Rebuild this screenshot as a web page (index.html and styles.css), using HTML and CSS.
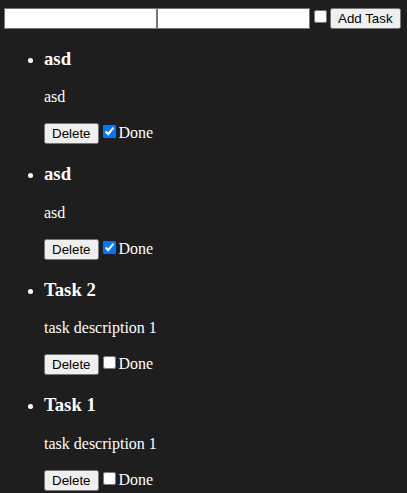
FILE: index.html
```html
<!DOCTYPE html>
<html>
<head>
<meta charset="utf-8">
<link rel="stylesheet" href="styles.css">
</head>
<body>
<div class="app">
  <div class="form"><input type="text" class="field"><input type="text" class="field"><input type="checkbox" class="check"><button class="btn">Add Task</button></div>
  <ul class="tasks">
    <li class="task">
      <h3 class="title">asd</h3>
      <p class="desc">asd</p>
      <div class="actions"><button class="btn">Delete</button><input type="checkbox" class="check" checked>Done</div>
    </li>
    <li class="task">
      <h3 class="title">asd</h3>
      <p class="desc">asd</p>
      <div class="actions"><button class="btn">Delete</button><input type="checkbox" class="check" checked>Done</div>
    </li>
    <li class="task">
      <h3 class="title">Task 2</h3>
      <p class="desc">task description 1</p>
      <div class="actions"><button class="btn">Delete</button><input type="checkbox" class="check">Done</div>
    </li>
    <li class="task">
      <h3 class="title">Task 1</h3>
      <p class="desc">task description 1</p>
      <div class="actions"><button class="btn">Delete</button><input type="checkbox" class="check">Done</div>
    </li>
  </ul>
</div>
</body>
</html>
```
FILE: styles.css
```css
html { background: #1e1e1e; }
body {
  margin: 0;
  padding: 7px 4px;
  background: #1e1e1e;
  color: #ffffff;
  font-family: "Liberation Serif", serif;
  font-size: 16px;
}
.field, .btn {
  font-family: "Liberation Sans", Arial, sans-serif;
  font-size: 13.333px;
}
.field {
  width: 153px;
  box-sizing: border-box;
  height: 21px;
  margin: 0;
  border: 1px solid #767676;
  background: #fff;
}
.check { accent-color: #0075ff; }
.tasks { margin: 15px 0 16px; padding-left: 40px; }
.title { font-size: 18.72px; margin: 18.72px 0; }
.desc { margin: 16px 0; }
```
